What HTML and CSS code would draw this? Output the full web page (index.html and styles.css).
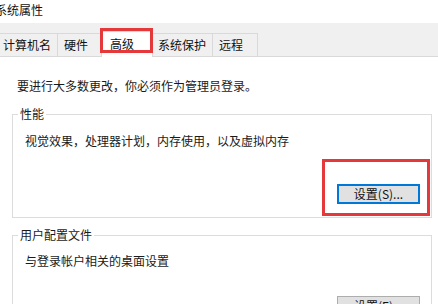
FILE: index.html
```html
<!DOCTYPE html>
<html lang="zh-CN">
<head>
<meta charset="utf-8">
<title>系统属性</title>
<link rel="stylesheet" href="styles.css">
</head>
<body>
<div class="window">
  <div class="titlebar"><span class="title">系统属性</span></div>
  <div class="tabbar">
    <div class="tabs">
      <div class="tab first">计算机名</div>
      <div class="tab">硬件</div>
      <div class="tab selected">高级<span class="mark mark-tab"></span></div>
      <div class="tab">系统保护</div>
      <div class="tab">远程</div>
    </div>
  </div>
  <div class="content">
    <p class="intro">要进行大多数更改，你必须作为管理员登录。</p>
    <fieldset class="group group-perf">
      <legend>性能</legend>
      <p class="desc">视觉效果，处理器计划，内存使用，以及虚拟内存</p>
      <div class="actions">
        <button class="btn default">设置(S)...<span class="mark mark-btn"></span></button>
      </div>
    </fieldset>
    <fieldset class="group group-profile">
      <legend>用户配置文件</legend>
      <p class="desc">与登录帐户相关的桌面设置</p>
      <div class="actions">
        <button class="btn">设置(E)...</button>
      </div>
    </fieldset>
  </div>
</div>
</body>
</html>
```

FILE: styles.css
```css
* { box-sizing: border-box; }
html, body {
  margin: 0;
  padding: 0;
  background: #ffffff;
}
body {
  width: 438px;
  height: 304px;
  overflow: hidden;
  font-family: "Noto Sans CJK SC", "Microsoft YaHei", sans-serif;
  font-size: 12px;
  color: #1a1a1a;
}
.window { width: 438px; }

.titlebar {
  height: 23px;
  line-height: 20px;
  background: #ffffff;
  white-space: nowrap;
}
.title {
  display: inline-block;
  margin-left: -5px;
  color: #111;
}

.tabbar {
  height: 34px;
  background: #f0f0f0;
  border-bottom: 1px solid #d9d9d9;
  padding-top: 10px;
}
.tabs {
  display: flex;
  align-items: flex-end;
  height: 23px;
  margin-left: -4px;
}
.tab {
  position: relative;
  height: 23px;
  min-width: 46px;
  padding: 0 6px;
  line-height: 21px;
  border: 1px solid #d9d9d9;
  border-bottom: none;
  margin-left: -1px;
  background: #f0f0f0;
  white-space: nowrap;
  color: #111;
}
.tab.first { margin-left: 0; }
.tab.selected {
  height: 26px;
  margin-bottom: -1px;
  padding: 0 8px;
  min-width: 52px;
  margin-left: -2px;
  margin-right: -1px;
  line-height: 24px;
  background: #ffffff;
  z-index: 2;
}

.mark {
  position: absolute;
  border: 3px solid #e5383b;
  pointer-events: none;
}
.mark-tab {
  left: -2px;
  top: -4px;
  width: 53px;
  height: 25px;
}
.mark-btn {
  left: -17px;
  top: -27px;
  width: 108px;
  height: 57px;
}

.content {
  padding: 0 6px 0 12px;
}
.intro {
  margin: 21px 0 0 5px;
  line-height: 16px;
}

.group {
  margin: 12px 0 0 0;
  padding: 11px 11px 13px 12px;
  border: 1px solid #dcdcdc;
  min-width: 0;
}
.group legend {
  margin-left: -7px;
  padding: 0 2px;
  line-height: 16px;
}
.group-profile {
  margin-top: 9px;
  padding-top: 10px;
}
.desc {
  margin: 0;
  line-height: 16px;
}
.actions {
  display: flex;
  justify-content: flex-end;
  margin-top: 35px;
}
.group-profile .actions { margin-top: 27px; }

.btn {
  position: relative;
  width: 83px;
  height: 20px;
  padding: 0;
  font-family: inherit;
  font-size: 12px;
  line-height: 16px;
  color: #111;
  background: #e1e1e1;
  border: 1px solid #adadad;
}
.btn.default {
  border: 2px solid #0078d7;
}
```
